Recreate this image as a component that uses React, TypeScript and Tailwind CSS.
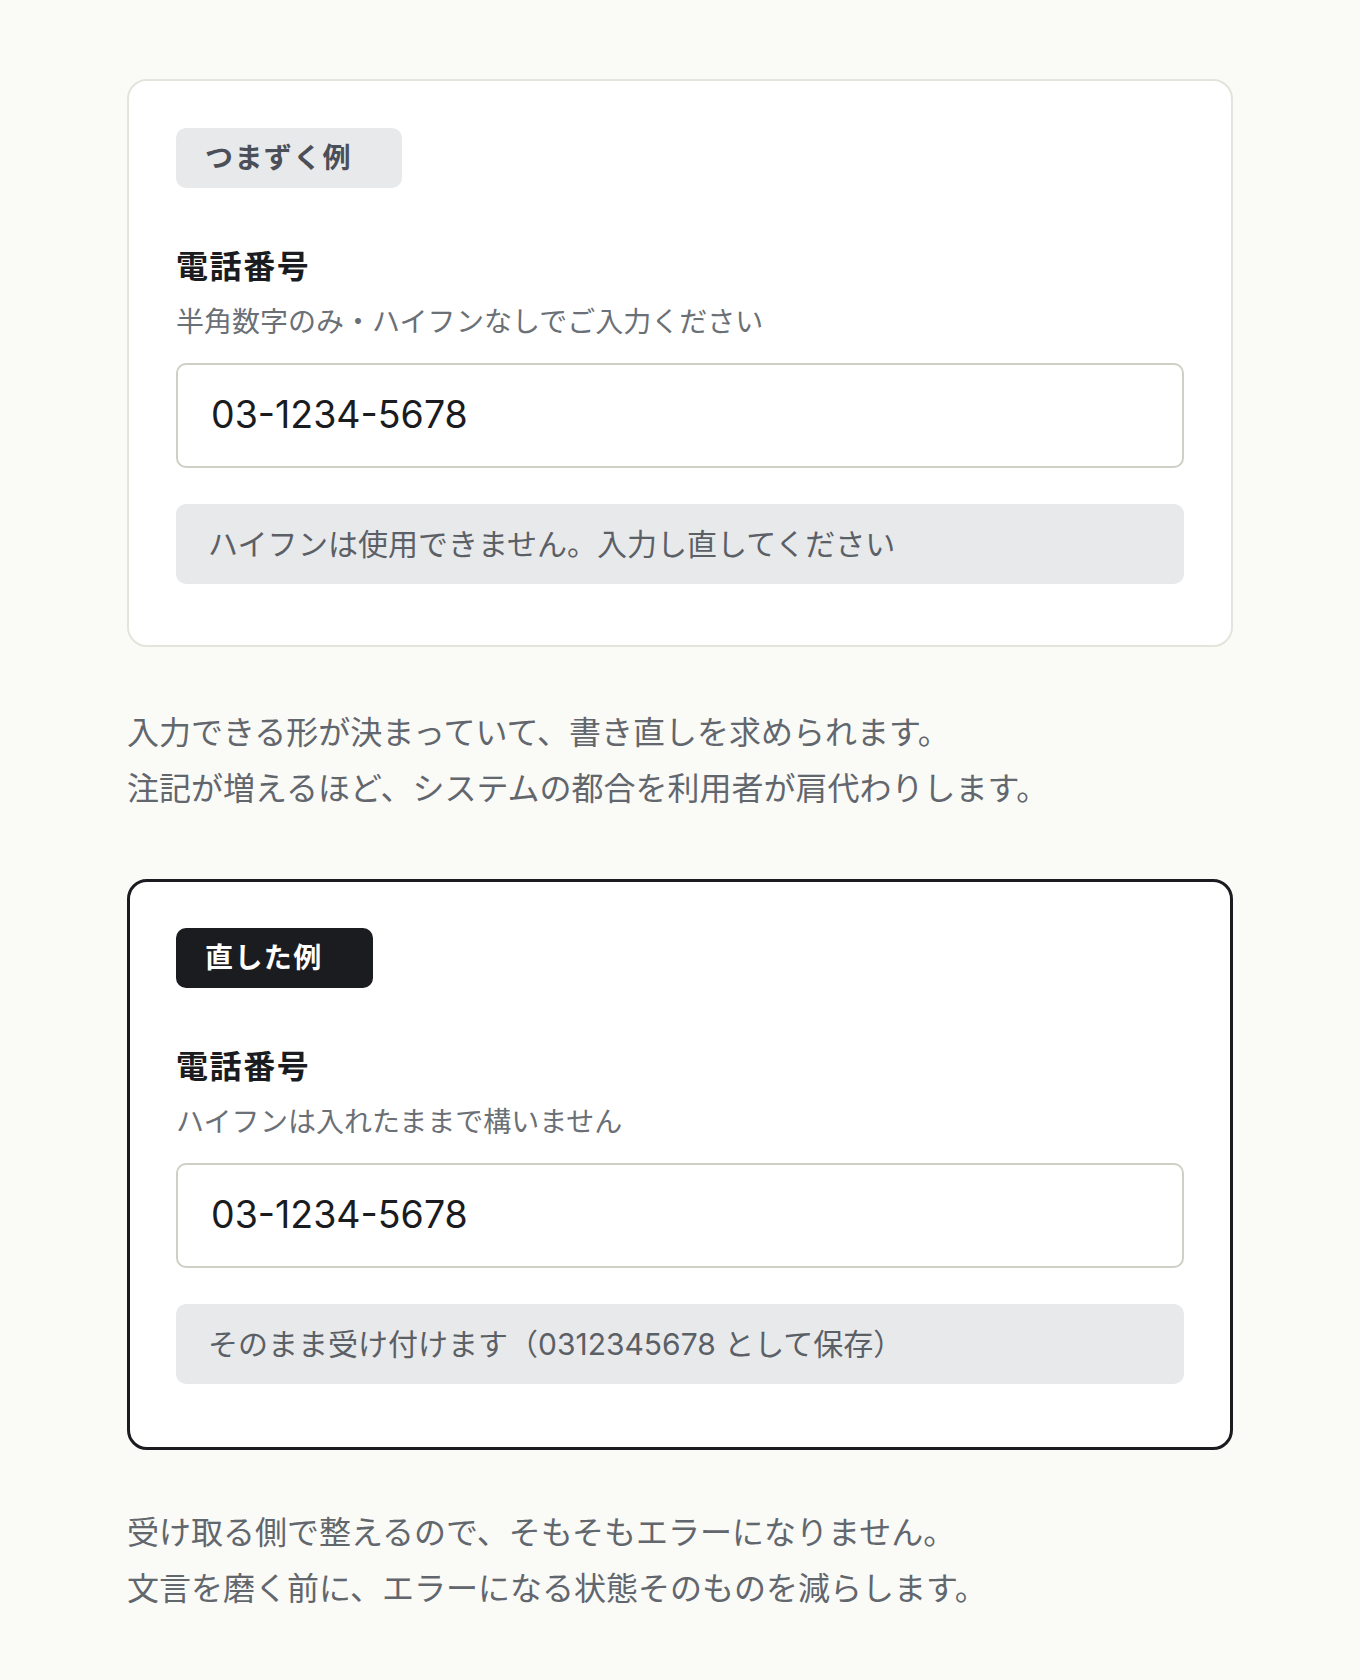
const sans = "font-['Inter','Noto_Sans_CJK_JP',sans-serif]";

type ExampleProps = {
  tone: 'bad' | 'good';
  badge: string;
  hint: string;
  message: string;
};

function ExampleCard({ tone, badge, hint, message }: ExampleProps) {
  const good = tone === 'good';
  return (
    <section
      className={
        good
          ? 'rounded-[20px] border-[3px] border-[#1b1c20] bg-white px-[46px] pt-[46px] pb-[63px]'
          : 'rounded-[20px] border-2 border-[#e4e4dc] bg-white px-[47px] pt-[47px] pb-[61px]'
      }
    >
      <span
        className={
          good
            ? 'inline-flex h-[60px] items-center rounded-[10px] bg-[#1b1c20] pl-[29px] pr-[50px] text-[28px] font-bold tracking-[0.05em] text-white'
            : 'inline-flex h-[60px] items-center rounded-[10px] bg-[#e8e9eb] pl-[29px] pr-[50px] text-[28px] font-bold tracking-[0.05em] text-[#4b4f57]'
        }
      >
        {badge}
      </span>

      <label className="mt-[55px] block text-[32px] leading-[48px] font-bold tracking-[0.05em] text-[#1b1c20]">
        電話番号
      </label>
      <p className="mt-[10px] text-[28px] leading-[42px] text-[#6b6f76]">{hint}</p>

      <div className="mt-[20px] flex h-[105px] items-center rounded-[10px] border-2 border-[#cfcfc6] bg-white px-[33px]">
        <span className="text-[37.5px] font-normal text-[#1b1c20]">03-1234-5678</span>
      </div>

      <div className="mt-[36px] flex h-[80px] items-center rounded-[10px] bg-[#e8e9eb] px-[32px]">
        <span className="text-[30px] text-[#5b5f66]">{message}</span>
      </div>
    </section>
  );
}

export default function App() {
  return (
    <div className={`min-h-screen bg-[#fafaf7] ${sans}`}>
      <div className="mx-auto w-[1106px] pt-[79px] pb-16">
        <ExampleCard
          tone="bad"
          badge="つまずく例"
          hint="半角数字のみ・ハイフンなしでご入力ください"
          message="ハイフンは使用できません。入力し直してください"
        />

        <p className="mt-[58px] text-[32px] leading-[56px] text-[#62666d]">
          入力できる形が決まっていて、書き直しを求められます。
          <br />
          注記が増えるほど、システムの都合を利用者が肩代わりします。
        </p>

        <div className="mt-[62px]">
          <ExampleCard
            tone="good"
            badge="直した例"
            hint="ハイフンは入れたままで構いません"
            message="そのまま受け付けます（0312345678 として保存）"
          />
        </div>

        <p className="mt-[55px] text-[32px] leading-[56px] text-[#62666d]">
          受け取る側で整えるので、そもそもエラーになりません。
          <br />
          文言を磨く前に、エラーになる状態そのものを減らします。
        </p>
      </div>
    </div>
  );
}
